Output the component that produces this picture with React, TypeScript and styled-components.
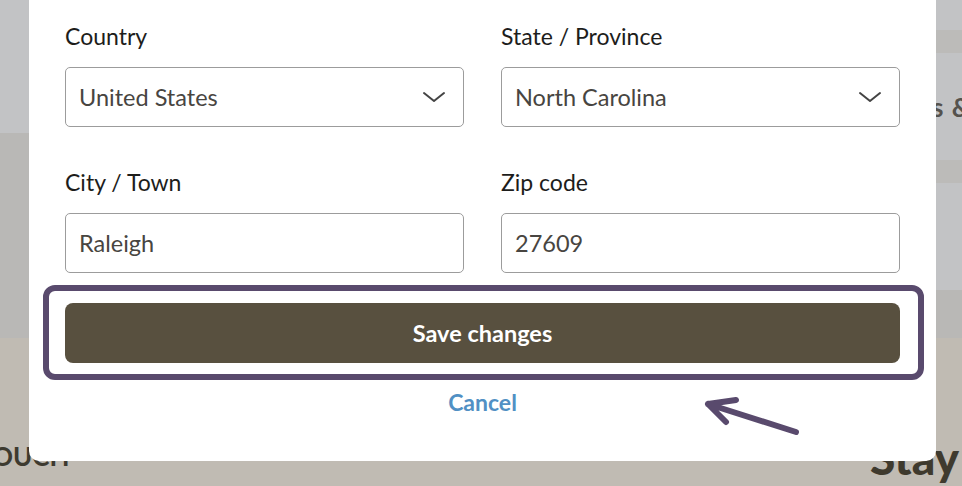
import React from "react";
import styled, { createGlobalStyle } from "styled-components";

const Global = createGlobalStyle`
  html, body { margin: 0; padding: 0; }
  body {
    width: 962px;
    height: 486px;
    overflow: hidden;
    font-family: Lato, "Noto Sans", sans-serif;
  }
  #root { width: 962px; height: 486px; position: relative; overflow: hidden; }
`;

const Backdrop = styled.div`
  display: flex;
  flex-direction: column;
  width: 962px;
  height: 486px;
`;

const TopSection = styled.div`
  display: flex;
  height: 338px;
  justify-content: space-between;
`;

const EdgeColumn = styled.div<{ $w: number }>`
  width: ${(p) => p.$w}px;
  display: flex;
  flex-direction: column;
  overflow: hidden;
`;

const Band = styled.div<{ $h?: number; $bg: string }>`
  ${(p) => (p.$h ? `height: ${p.$h}px; flex: none;` : "flex: 1;")}
  background: ${(p) => p.$bg};
  display: flex;
  align-items: center;
`;

const EdgeText = styled.span`
  font-weight: 700;
  font-size: 26px;
  color: #55524d;
  white-space: nowrap;
  margin-left: -4px;
  letter-spacing: 1px;
`;

const BottomSection = styled.div`
  flex: 1;
  background: #c0bbb3;
  display: flex;
  justify-content: space-between;
  align-items: flex-end;
  overflow: hidden;
`;

const TouchText = styled.span`
  font-weight: 700;
  font-size: 26px;
  color: #3d3a30;
  margin-left: -8px;
  margin-bottom: 17px;
  white-space: nowrap;
  line-height: 1;
`;

const StayText = styled.span`
  font-weight: 900;
  font-size: 46px;
  color: #3f3a2e;
  line-height: 1;
  margin-right: 3px;
  margin-bottom: 5px;
  white-space: nowrap;
`;

const Modal = styled.div`
  position: absolute;
  left: 29px;
  top: 0;
  width: 907px;
  height: 461px;
  background: #ffffff;
  border-radius: 0 0 10px 10px;
  box-sizing: border-box;
  padding: 23px 36px 0 36px;
  display: flex;
  flex-direction: column;
`;

const FieldGrid = styled.div`
  display: grid;
  grid-template-columns: 1fr 1fr;
  column-gap: 37px;
  row-gap: 42px;
`;

const Field = styled.div`
  display: flex;
  flex-direction: column;
  gap: 17px;
`;

const Label = styled.label`
  font-size: 23px;
  line-height: 27px;
  color: #1d1d1b;
`;

const InputBox = styled.div`
  height: 60px;
  box-sizing: border-box;
  border: 1px solid #9c9c9c;
  border-radius: 5px;
  display: flex;
  align-items: center;
  justify-content: space-between;
  padding: 0 17px 0 13px;
  font-size: 23.5px;
  color: #484541;
`;

const Chevron = () => (
  <svg width="24" height="12" viewBox="0 0 24 12" fill="none">
    <path d="M2 2 L12 10 L22 2" stroke="#444" strokeWidth="2" strokeLinecap="round" strokeLinejoin="round" />
  </svg>
);

const Highlight = styled.div`
  margin: 12px -24px 0 -22px;
  border: 6px solid #594a6d;
  border-radius: 12px;
  padding: 12px 18px 11px 16px;
`;

const SaveButton = styled.button`
  width: 100%;
  height: 60px;
  border: none;
  border-radius: 8px;
  background: #58503f;
  color: #ffffff;
  font-family: Lato, "Noto Sans", sans-serif;
  font-weight: 700;
  font-size: 23.5px;
  cursor: pointer;
`;

const CancelLink = styled.a`
  align-self: center;
  margin-top: 8px;
  font-weight: 700;
  font-size: 23px;
  line-height: 28px;
  color: #5190c4;
  text-decoration: none;
`;

const ArrowSvg = styled.svg`
  position: absolute;
  left: 640px;
  top: 392px;
`;

const fields = [
  { label: "Country", value: "United States", select: true },
  { label: "State / Province", value: "North Carolina", select: true },
  { label: "City / Town", value: "Raleigh", select: false },
  { label: "Zip code", value: "27609", select: false },
];

export default function App() {
  return (
    <>
      <Global />
      <Backdrop>
        <TopSection>
          <EdgeColumn $w={29}>
            <Band $h={133} $bg="#c2c3c5" />
            <Band $bg="#b9b8b6" />
          </EdgeColumn>
          <EdgeColumn $w={26}>
            <Band $h={30} $bg="#c2c3c5" />
            <Band $h={23} $bg="#bcbbb9" />
            <Band $h={107} $bg="#c2c3c5">
              <EdgeText>s &amp;</EdgeText>
            </Band>
            <Band $h={23} $bg="#bcbbb9" />
            <Band $h={107} $bg="#c2c3c5" />
            <Band $bg="#b9b8b6" />
          </EdgeColumn>
        </TopSection>
        <BottomSection>
          <TouchText>OUCH</TouchText>
          <StayText>Stay</StayText>
        </BottomSection>
      </Backdrop>
      <Modal>
        <FieldGrid>
          {fields.map((f) => (
            <Field key={f.label}>
              <Label>{f.label}</Label>
              <InputBox>
                <span>{f.value}</span>
                {f.select && <Chevron />}
              </InputBox>
            </Field>
          ))}
        </FieldGrid>
        <Highlight>
          <SaveButton>Save changes</SaveButton>
        </Highlight>
        <CancelLink href="#">Cancel</CancelLink>
        <ArrowSvg width="140" height="60" viewBox="0 0 140 60" fill="none">
          <path
            d="M127 40 L39 12 M39 12 L67 8 M39 12 L57 30"
            stroke="#594a6d"
            strokeWidth="6"
            strokeLinecap="round"
            strokeLinejoin="round"
          />
        </ArrowSvg>
      </Modal>
    </>
  );
}
